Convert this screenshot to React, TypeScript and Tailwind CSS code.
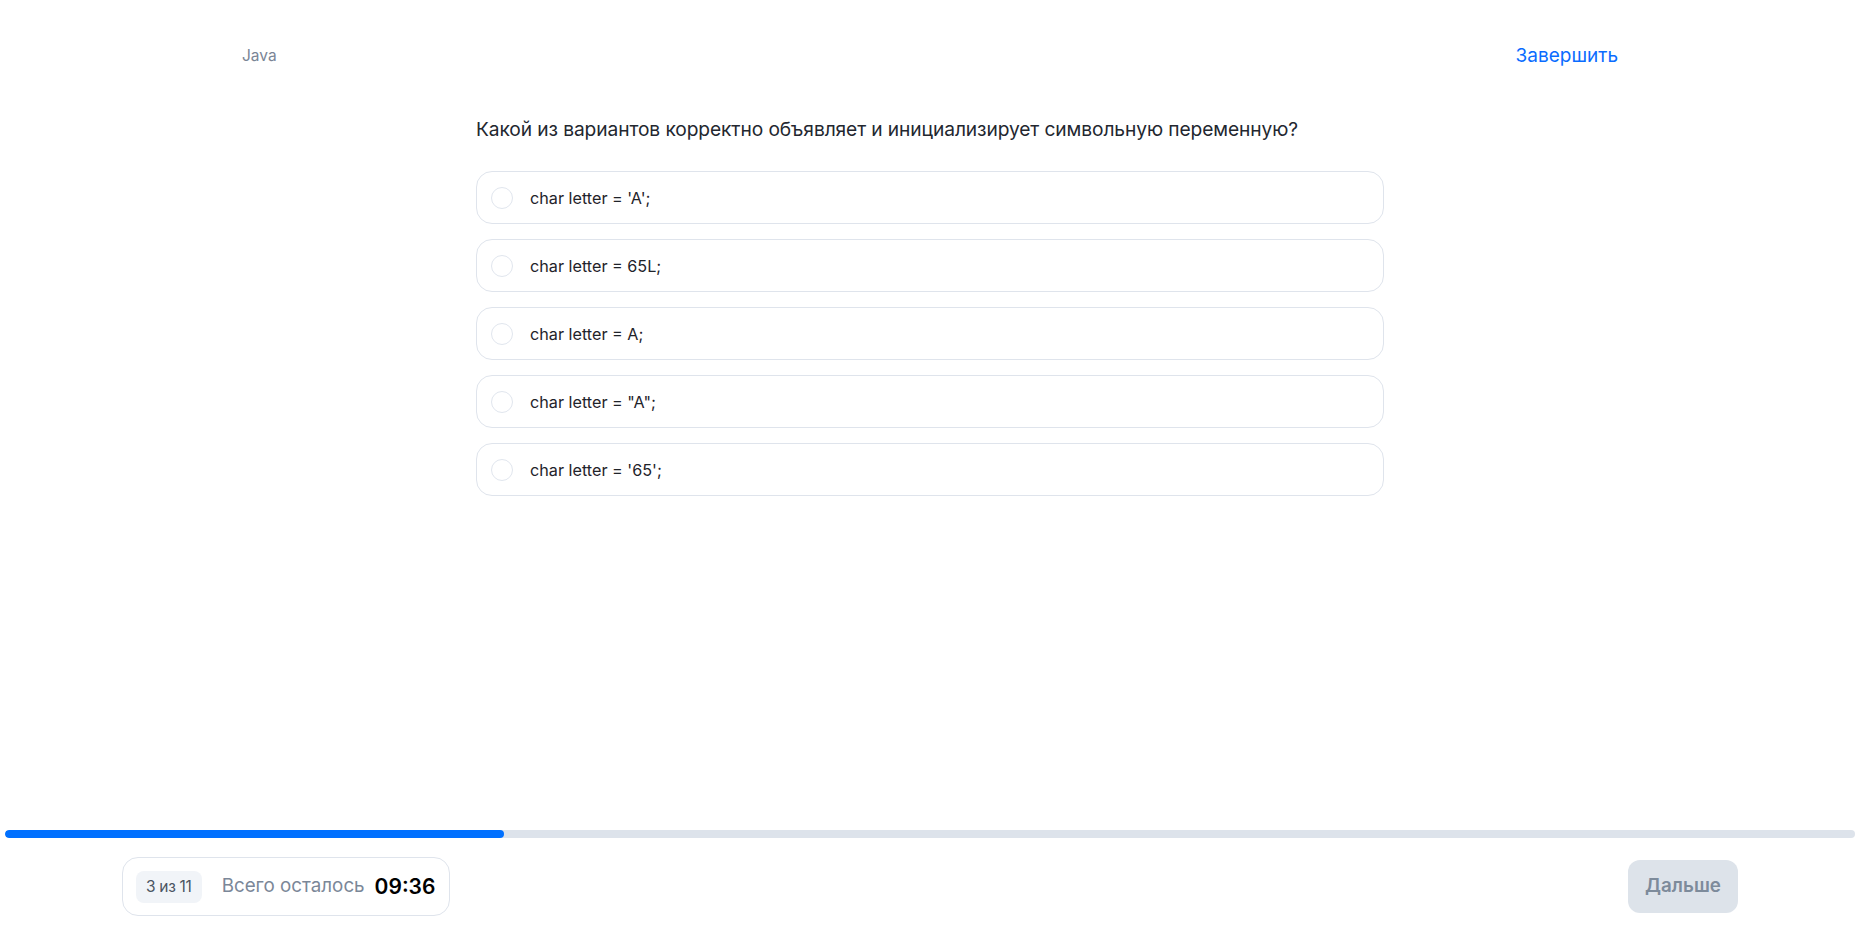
import React, { useState } from 'react';

const options = [
  "char letter = 'A';",
  'char letter = 65L;',
  'char letter = A;',
  'char letter = "A";',
  "char letter = '65';",
];

const App: React.FC = () => {
  const [selected, setSelected] = useState<number | null>(null);
  const progress = (504 - 5) / (1855 - 5);

  return (
    <div className="min-h-screen bg-white flex flex-col font-['Inter',sans-serif] text-[#23272f]">
      {/* Header */}
      <header className="w-[1376px] mx-auto pt-[44px] h-[68px] flex items-center justify-between">
        <span className="text-[15.5px] leading-5 text-[#7a8596]">Java</span>
        <button className="text-[19px] leading-6 text-[#0a6cff]">Завершить</button>
      </header>

      {/* Question */}
      <main className="flex-1 w-[908px] mx-auto pt-[47px]">
        <h2 className="text-[19.2px] leading-7 tracking-[-0.1px]">
          Какой из вариантов корректно объявляет и инициализирует символьную переменную?
        </h2>
        <div className="mt-[28px] flex flex-col gap-[15px]">
          {options.map((opt, i) => (
            <label
              key={i}
              onClick={() => setSelected(i)}
              className="h-[53px] rounded-[16px] border border-[#dfe4ec] flex items-center px-[14px] gap-[17px] cursor-pointer"
            >
              <span
                className={`w-[22px] h-[22px] rounded-full border-[1.5px] ${selected === i ? 'border-[#0a6cff] border-[6px]' : 'border-[#e1e6ee]'}`}
              />
              <span className="text-[16.2px] leading-6 text-[#1f232a]">{opt}</span>
            </label>
          ))}
        </div>
      </main>

      {/* Footer */}
      <footer className="pb-[19px]">
        <div className="mx-[5px] h-[8px] rounded-full bg-[#dde3eb] overflow-hidden">
          <div className="h-full rounded-full bg-[#0070ff]" style={{ width: `${progress * 100}%` }} />
        </div>
        <div className="w-[1616px] mx-auto mt-[19px] flex items-center justify-between">
          <div className="h-[59px] rounded-[16px] border border-[#dfe4ec] flex items-center pl-[13px] pr-[14px]">
            <span className="h-[32px] px-[10px] rounded-[8px] bg-[#f1f4f8] flex items-center text-[15.5px] text-[#4b5563] tracking-[-0.3px]">
              3 из 11
            </span>
            <span className="ml-[20px] text-[18.8px] text-[#7b8798]">Всего осталось</span>
            <span className="ml-[10px] text-[21px] font-semibold text-black">09:36</span>
          </div>
          <button className="w-[110px] h-[53px] rounded-[12px] bg-[#dde3ea] text-[18.8px] font-semibold text-[#7d8b9b]">
            Дальше
          </button>
        </div>
      </footer>
    </div>
  );
};

export default App;
